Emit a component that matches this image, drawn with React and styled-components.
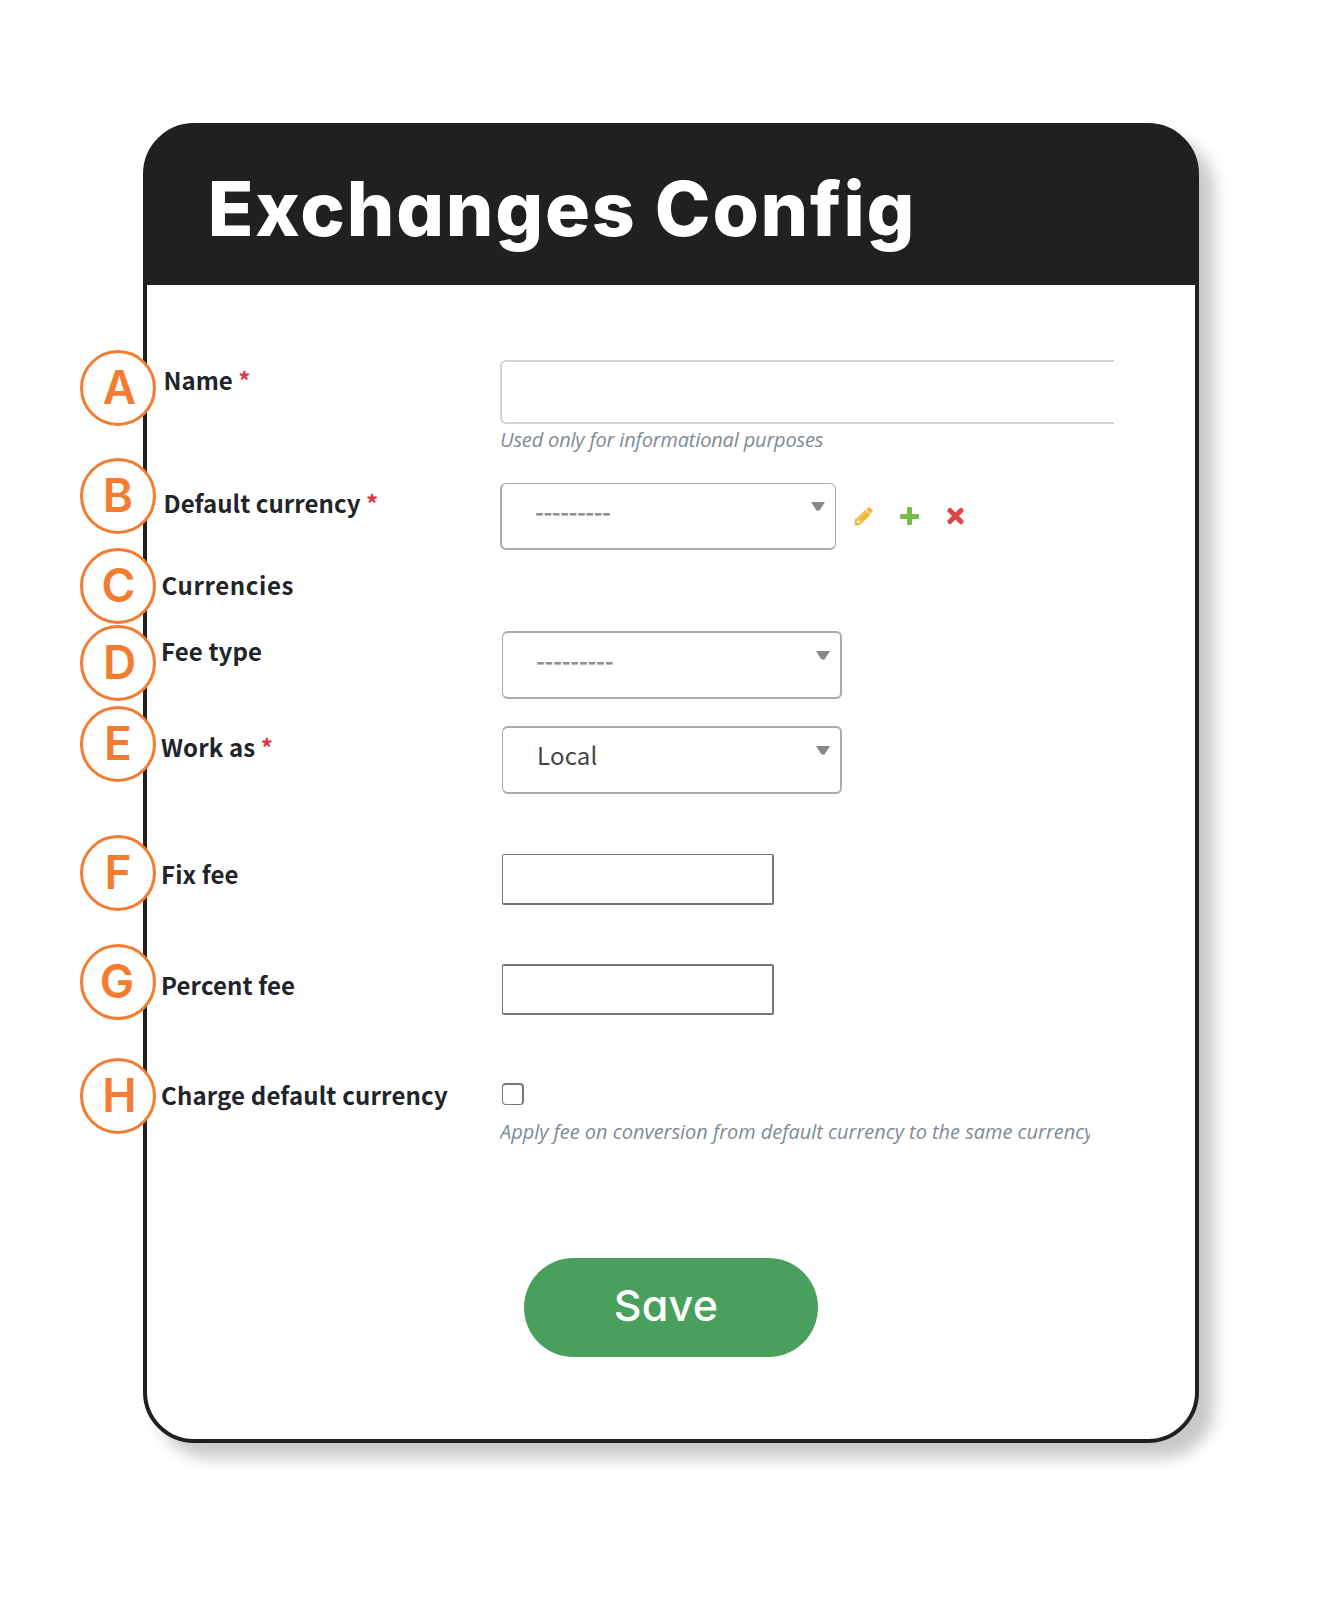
import React from "react";
import styled, { createGlobalStyle } from "styled-components";

const GlobalStyle = createGlobalStyle`
  * { box-sizing: border-box; }
  body { margin: 0; background: #fff; }
`;

const display = `"Inter", "Liberation Sans", sans-serif`;
const text = `"Noto Sans CJK SC", "Open Sans", sans-serif`;

const Page = styled.main`
  width: 1342px;
  height: 1598px;
  padding: 123.4px 0 0 142.8px;
  background: #fff;
`;

const Card = styled.section`
  display: flex;
  flex-direction: column;
  width: 1056px;
  height: 1319.6px;
  border: 4px solid #202020;
  border-radius: 51px;
  background: #fff;
  box-shadow: 15px 15px 16px rgba(0, 0, 0, 0.22);
`;

const Header = styled.header`
  height: 159px;
  margin: -1px -1px 0;
  padding: 34.5px 0 0 62px;
  border-radius: 47px 47px 0 0;
  background: #202020;
`;

const Title = styled.h1`
  margin: 0;
  color: #fff;
  font: 800 75px/96px ${display};
  font-feature-settings: "cv11";
  letter-spacing: 1.8px;
  white-space: nowrap;
`;

const Form = styled.form`
  display: flex;
  flex-direction: column;
  margin: 64.6px 0 0 -66.8px;
`;

const Row = styled.div`
  display: grid;
  grid-template-columns: 82px 338px 1fr;
  align-items: start;
  height: ${(p) => p.$height}px;
`;

const Badge = styled.span`
  display: flex;
  align-items: center;
  justify-content: center;
  width: 76px;
  height: 76px;
  padding-left: ${(p) => Math.max(0, p.$shift * 2)}px;
  padding-right: ${(p) => Math.max(0, -p.$shift * 2)}px;
  padding-bottom: 1px;
  border: 3px solid #f47c30;
  border-radius: 50%;
  background: #fff;
  color: #f47c30;
  font: 600 46px/69px ${display};
`;

const Label = styled.label`
  padding: ${(p) => p.$top + 1}px 0 0 ${(p) => p.$indent || 0}px;
  margin-left: -1px;
  color: #212529;
  font: 700 24px/30px ${text};
  letter-spacing: ${(p) => p.$spacing || 0}px;
  white-space: nowrap;
`;

const Required = styled.span`
  color: #dc3545;
`;

const Control = styled.div`
  padding: ${(p) => p.$top}px 0 0 ${(p) => p.$indent ?? 2}px;
`;

const Inline = styled.div`
  display: flex;
  align-items: center;
`;

const WideInput = styled.input`
  display: block;
  width: 614px;
  height: 64px;
  border: 2px solid #ced4da;
  border-right: 0;
  border-radius: 6px 0 0 6px;
  background: #fff;
`;

const NumberInput = styled.input`
  display: block;
  width: 272px;
  height: 51px;
  border: solid #767676;
  border-width: ${(p) => p.$borders};
  border-radius: 2px;
  background: #fff;
`;

const SelectBox = styled.div`
  display: flex;
  justify-content: space-between;
  align-items: flex-start;
  width: ${(p) => p.$width}px;
  height: ${(p) => p.$height}px;
  padding: 0 10px 0 34px;
  border: solid #aaa;
  border-width: ${(p) => p.$borders};
  border-radius: 6px;
  background: #fff;
`;

const SelectValue = styled.span`
  padding-top: 12px;
  margin-left: ${(p) => (p.$muted ? -1 : 0)}px;
  color: ${(p) => (p.$muted ? "#909090" : "#444")};
  font: ${(p) => (p.$muted ? 700 : 400)} 24px/30px ${text};
  letter-spacing: ${(p) => p.$spacing || 0}px;
`;

const Arrow = styled.svg`
  display: block;
  width: 14px;
  height: 9px;
  margin-top: 18px;
`;

const Actions = styled.div`
  display: flex;
  gap: 27px;
  padding: 1px 0 0 18px;
`;

const Icon = styled.svg`
  display: block;
  width: 19px;
  height: 19px;
`;

const Help = styled.p`
  width: ${(p) => p.$width}px;
  margin: ${(p) => p.$top}px 0 0;
  overflow: hidden;
  color: #7f8a94;
  font: italic 400 20px/28px "Open Sans", sans-serif;
  letter-spacing: ${(p) => p.$spacing}px;
  white-space: nowrap;
`;

const Checkbox = styled.input`
  display: block;
  appearance: none;
  width: 22px;
  height: 22px;
  margin: 0;
  border: solid #767676;
  border-width: 2px 2px 1px 1px;
  border-radius: 4px;
  background: #fff;
`;

const SaveButton = styled.button`
  width: 294px;
  height: 99px;
  margin: 124px 0 0 444px;
  padding: 0 10px 5px 0;
  border: 0;
  border-radius: 50px;
  background: #48a05c;
  color: #fff;
  font: 500 43px/50px ${display};
  font-feature-settings: "cv11";
  letter-spacing: 0.3px;
`;

function Select({ children, muted, spacing, width = 340, height = 68, borders = "2px 2px 2px 1px" }) {
  return (
    <SelectBox $width={width} $height={height} $borders={borders}>
      <SelectValue $muted={muted} $spacing={spacing}>{children}</SelectValue>
      <Arrow viewBox="0 0 14 9"><path d="M0 0H14L8.5 8.5H5.5Z" fill="#888" /></Arrow>
    </SelectBox>
  );
}

function Field({ letter, shift = 0, height, label, required, labelTop, indent, spacing, children }) {
  return (
    <Row $height={height}>
      <Badge $shift={shift}>{letter}</Badge>
      <Label $top={labelTop} $indent={indent} $spacing={spacing}>
        {label}{required && <Required> *</Required>}
      </Label>
      {children}
    </Row>
  );
}

export default function App() {
  return (
    <Page>
      <GlobalStyle />
      <Card>
        <Header><Title>Exchanges Config</Title></Header>
        <Form>
          <Field letter="A" shift={1.5} height={108} label="Name" required labelTop={14} indent={2.5}>
            <Control $top={10} $indent={0}>
              <WideInput />
              <Help $top={2} $width={400} $spacing={-0.17}>Used only for informational purposes</Help>
            </Control>
          </Field>
          <Field letter="B" height={90} label="Default currency" required labelTop={29} indent={2.5} spacing={0.05}>
            <Control $top={25} $indent={0}>
              <Inline>
                <Select muted spacing={-0.5} width={336} height={67} borders="1px 1px 2px 2px">---------</Select>
                <Actions>
                  <Icon viewBox="0 0 19 19">
                    <path d="M1 12.5L11.5 2.5L16.5 7.5L6.5 17.5L1 18Z" fill="#f2c358" />
                    <path d="M12.5 2L15 0L19 3.5L16.5 7Z" fill="#efb52f" />
                    <path d="M8 13L14 7" stroke="#efb52f" strokeWidth="4" />
                    <path d="M1.5 12.5V17.5H6" fill="none" stroke="#efb52f" strokeWidth="1.6" />
                    <path d="M3.5 14L5 16" stroke="#fff" strokeWidth="2" />
                  </Icon>
                  <Icon viewBox="0 0 19 19"><path d="M8 0H11Q12 0 12 1V7H18Q19 7 19 8V11Q19 12 18 12H12V17Q12 18 11 18H8Q7 18 7 17V12H1Q0 12 0 11V8Q0 7 1 7H7V1Q7 0 8 0Z" fill="#78bd49" /></Icon>
                  <Icon viewBox="0 0 19 19"><path d="M4 3.5L15 14.5M15 3.5L4 14.5" stroke="#dd4646" strokeWidth="5" strokeLinecap="round" /><path d="M6 5.5H13V12.5H6Z" fill="#dd4646" /></Icon>
                </Actions>
              </Inline>
            </Control>
          </Field>
          <Field letter="C" shift={0.5} height={77} label="Currencies" labelTop={21} indent={0.5} spacing={0.6} />
          <Field letter="D" shift={1.5} height={81} label="Fee type" labelTop={10} spacing={0.12}>
            <Control $top={6}><Select muted spacing={-0.3}>---------</Select></Control>
          </Field>
          <Field letter="E" height={129.5} label="Work as" required labelTop={25} spacing={0.1}>
            <Control $top={20}><Select spacing={0.2}>Local</Select></Control>
          </Field>
          <Field letter="F" height={108.3} label="Fix fee" labelTop={22.6} spacing={0.12}>
            <Control $top={18.5}><NumberInput $borders="1px 2px 2px 1px" /></Control>
          </Field>
          <Field letter="G" shift={-1} height={114.2} label="Percent fee" labelTop={25.2} spacing={0.12}>
            <Control $top={20.2}><NumberInput $borders="2px 2px 2px 1px" /></Control>
          </Field>
          <Field letter="H" shift={1.5} height={76} label="Charge default currency" labelTop={21} spacing={0.15}>
            <Control $top={25}>
              <Checkbox type="checkbox" />
            </Control>
          </Field>
          <Row $height={0}>
            <span /><span />
            <Help $top={-16} $width={590} $spacing={-0.03}>Apply fee on conversion from default currency to the same currency</Help>
          </Row>
          <SaveButton type="button">Save</SaveButton>
        </Form>
      </Card>
    </Page>
  );
}
